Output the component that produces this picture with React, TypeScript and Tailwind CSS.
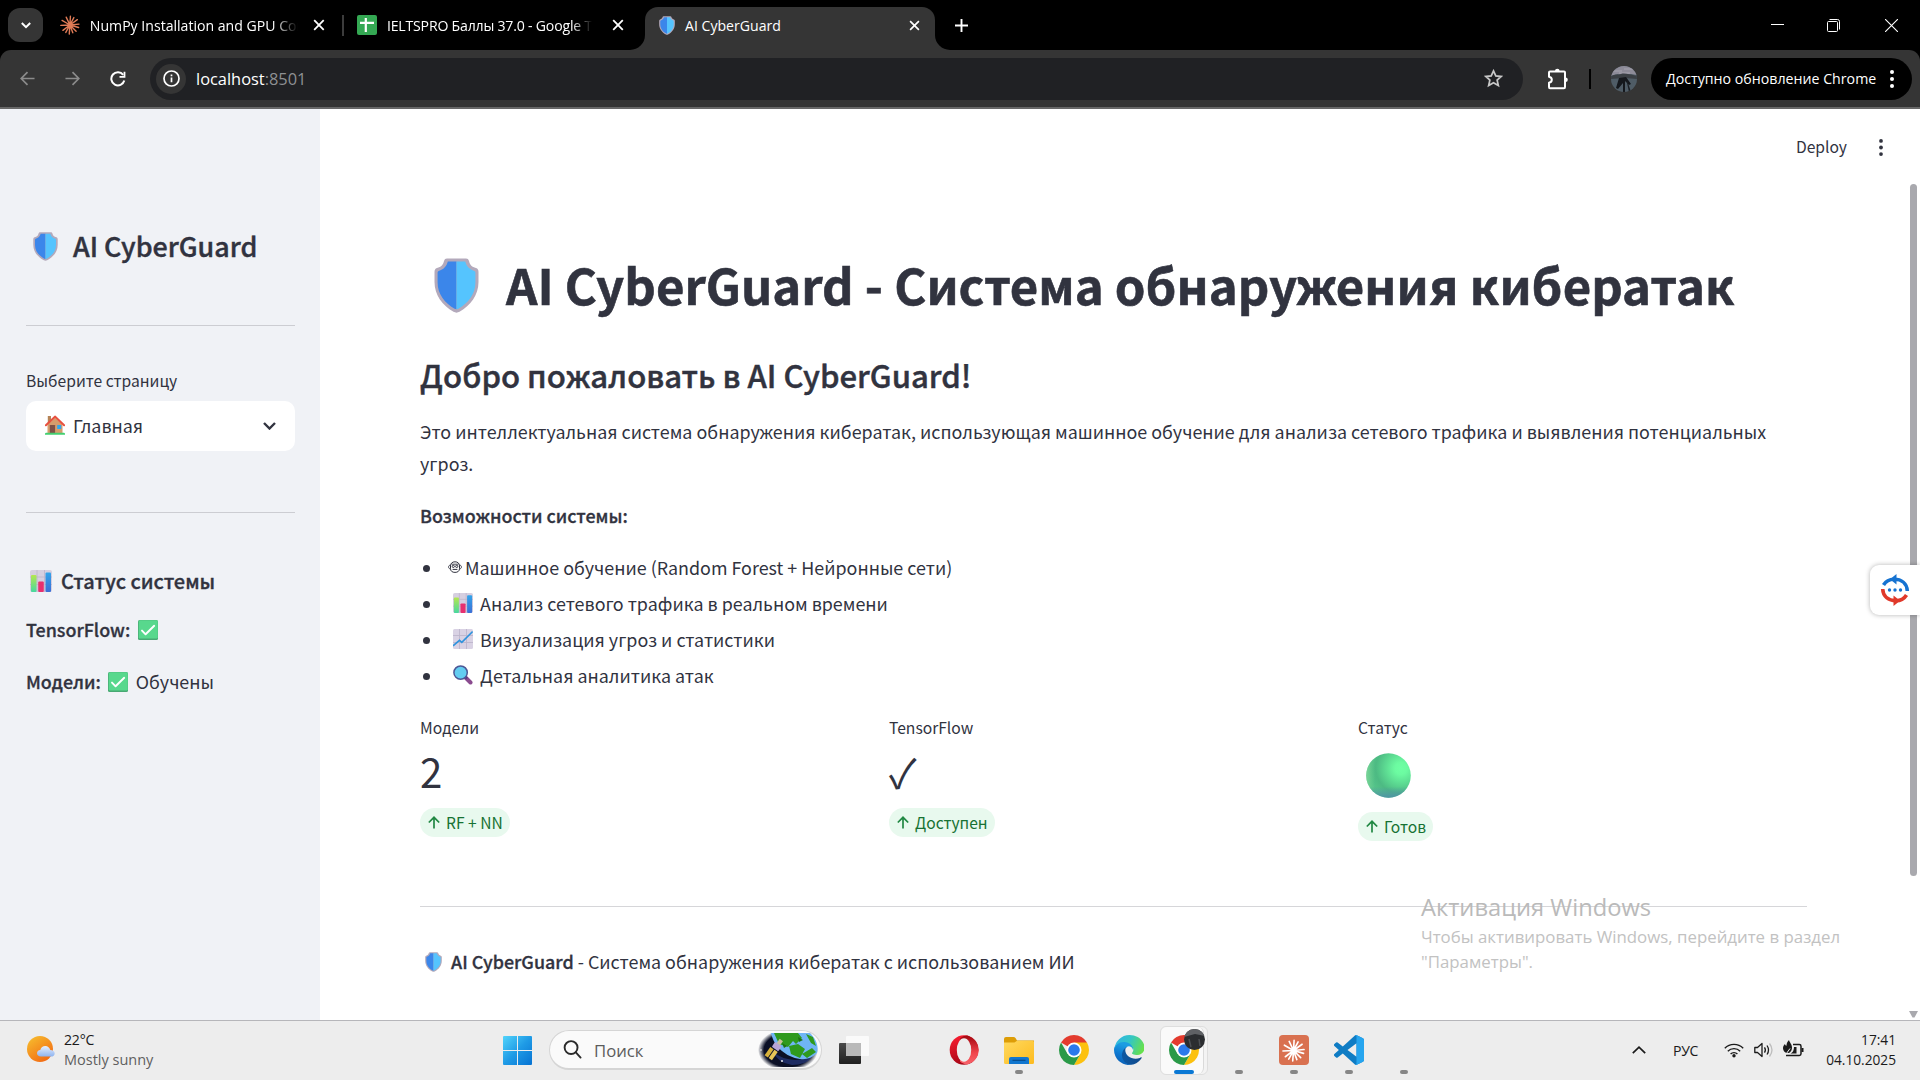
import type { ReactNode } from "react";

type IconProps = { className?: string };

const SOURCE = "font-['Noto_Sans_CJK_SC','Noto_Sans',sans-serif]";
const SEGOE = "font-['Open_Sans','Noto_Sans',sans-serif]";

/* ---------- emoji-like drawings ---------- */

function Shield({ className }: IconProps) {
  return (
    <svg viewBox="0 0 45 55" className={className} preserveAspectRatio="none">
      <path d="M13 .5h19c1.500 0 2.500.8 3 2.500C36 7 38 9 42 10c1.800.6 2.500 2 2.500 4v10c0 13-8 23.500-19 29.800-2 1.100-4 1.100-6 0C8.500 47.500.5 37 .5 24V14c0-2 .7-3.400 2.500-4C7 9 9 7 10 3c.5-1.700 1.500-2.500 3-2.500z" fill="#b3a9bb" />
      <path d="M22.500 3.500H13.800C12.500 8.500 9.500 11.500 4.800 13 3.900 13.300 3.600 14 3.600 15v9.500c0 11.500 7 20.500 17 26.300.6.3 1.200.5 1.900.5z" fill="#3b86ea" />
      <path d="M22.500 3.500h8.700c1.300 5 4.300 8 9 9.500.9.3 1.200 1 1.200 2v9.500c0 11.500-7 20.500-17 26.300-.6.300-1.200.5-1.900.5z" fill="#55c4fe" />
    </svg>
  );
}

function BarChart({ className }: IconProps) {
  return (
    <svg viewBox="0 0 22 22" className={className}>
      <defs>
        <linearGradient id="bar-green" x2="0" y2="1"><stop stopColor="#b4e650" /><stop offset="1" stopColor="#48d8a0" /></linearGradient>
        <linearGradient id="bar-blue" x2="0" y2="1"><stop stopColor="#32a4ea" /><stop offset="1" stopColor="#3c6fd6" /></linearGradient>
      </defs>
      <rect width="22" height="22" rx="2" fill="#d6cfe0" />
      <path d="M7 0v22M14.500 0v22M0 7h22M0 14.500h22" stroke="#bdb4ca" strokeWidth=".8" />
      <rect x="1" y="5" width="5.500" height="17" rx="1" fill="url(#bar-green)" />
      <rect x="8.200" y="11.500" width="5.600" height="10.500" rx="1" fill="#e7306f" />
      <rect x="15.500" y="2.500" width="5.500" height="19.500" rx="1" fill="url(#bar-blue)" />
    </svg>
  );
}

function LineChart({ className }: IconProps) {
  return (
    <svg viewBox="0 0 20 20" className={className}>
      <rect width="20" height="20" rx="1.500" fill="#d9d2e4" />
      <path d="M6.500 0v20M13.500 0v20M0 6.500h20M0 13.500h20" stroke="#beb5cc" strokeWidth=".9" />
      <path d="M0 16.800 6.500 11.300l2.300 2L19.600 2.600" fill="none" stroke="#2f93dd" strokeWidth="1.600" />
    </svg>
  );
}

function Magnifier({ className }: IconProps) {
  return (
    <svg viewBox="0 0 20 20" className={className}>
      <path d="m12.500 12.500 5 5" stroke="#8a4b8f" strokeWidth="4" strokeLinecap="round" />
      <path d="m11.800 11.500 2.200 2.200" stroke="#5a3b82" strokeWidth="2.500" />
      <circle cx="7.600" cy="7.600" r="6.700" fill="#63cdf1" stroke="#4d5796" strokeWidth="1.500" />
    </svg>
  );
}

function House({ className }: IconProps) {
  return (
    <svg viewBox="0 0 20 20" className={className}>
      <rect x="2.800" y="1" width="3.200" height="7" fill="#b58356" />
      <path d="M2.500 9.500 10.200 2.500l7.300 7V18.500h-15z" fill="#d69c6c" />
      <rect x="4.800" y="10" width="5.300" height="8" rx=".4" fill="#7f5147" />
      <rect x="12.200" y="10" width="4" height="4" fill="#2fa6ee" />
      <path d="M.9 10.300 10.200 1.600l8.900 8.700" fill="none" stroke="#e8503f" strokeWidth="2" strokeLinecap="round" strokeLinejoin="round" />
      <path d="M0 19q0-1.300 1.200-1.300h17.600q1.200 0 1.200 1.300v.8H0z" fill="#43cf70" />
    </svg>
  );
}

function CheckBox({ className }: IconProps) {
  return (
    <svg viewBox="0 0 20 20" className={className}>
      <rect width="20" height="20" rx="1.500" fill="#48a873" />
      <rect x=".7" y=".2" width="19.100" height="18.300" rx="1.200" fill="#58d88d" />
      <path d="m4 10.600 3.600 3.700L16.200 5.800" fill="none" stroke="#fff" strokeWidth="1.900" strokeLinecap="round" strokeLinejoin="round" />
    </svg>
  );
}

function GreenBall({ className }: IconProps) {
  return (
    <svg viewBox="0 0 45 45" className={className}>
      <defs>
        <radialGradient id="ball" cx=".78" cy=".34" r=".75"><stop stopColor="#6fffa4" /><stop offset=".18" stopColor="#6cfba1" /><stop offset=".75" stopColor="#4dba83" /><stop offset="1" stopColor="#55c48a" /></radialGradient>
        <linearGradient id="ball-edge" x2="0" y2="1"><stop offset=".75" stopColor="#4f8da8" stopOpacity="0" /><stop offset="1" stopColor="#4f8da8" stopOpacity=".9" /></linearGradient>
        <linearGradient id="ball-left"><stop stopColor="#86d99c" stopOpacity=".8" /><stop offset=".2" stopColor="#6dcf90" stopOpacity="0" /></linearGradient>
      </defs>
      <circle cx="22.500" cy="22.500" r="22.300" fill="url(#ball)" />
      <circle cx="22.500" cy="22.500" r="22.300" fill="url(#ball-left)" />
      <circle cx="22.500" cy="22.500" r="22.300" fill="url(#ball-edge)" />
    </svg>
  );
}

function RobotFace({ className }: IconProps) {
  return (
    <svg viewBox="0 0 14 12" className={className} fill="none" stroke="#31333f">
      <path d="M2.500 5C2.500 2.300 4.300.8 7 .8S11.500 2.300 11.500 5v2.600c0 2.500-1.800 3.800-4.500 3.800S2.500 10.100 2.500 7.600z" strokeWidth="1" />
      <path d="M2.500 4.200C1 4.200.6 5 .6 6s.4 1.800 1.900 1.800M11.500 4.200c1.500 0 1.900.8 1.900 1.800s-.4 1.800-1.900 1.800" strokeWidth=".9" />
      <path d="M3.500 3.200h7" strokeWidth=".9" />
      <circle cx="5.300" cy="5.400" r="1.100" strokeWidth="1" />
      <circle cx="8.700" cy="5.400" r="1.100" strokeWidth="1" />
      <path d="M4.600 8.400h4.800" strokeWidth="1" />
    </svg>
  );
}

/* ---------- browser icons ---------- */

function Burst({ className }: IconProps) {
  return (
    <svg viewBox="0 0 24 24" className={className} fill="none" stroke="currentColor" strokeWidth="1.700" strokeLinecap="round">
      <path d="M12 12 12.600 1.500M12 12l4.800-9M12 12l9-6.500M12 12l11-1M12 12l10.500 3M12 12l7.500 7.500M12 12l3.500 9.500M12 12l-.8 11M12 12l-5 9M12 12 3.500 18.500M12 12 1 12.500M12 12 2.500 6.500M12 12 7.500 2.500" />
    </svg>
  );
}

function Sheets({ className }: IconProps) {
  return (
    <svg viewBox="0 0 20 20" className={className}>
      <rect width="20" height="20" rx="2" fill="#34a853" />
      <path d="M8.800 3v14M3 7.800h14" stroke="#fff" strokeWidth="2.200" />
    </svg>
  );
}

function Cross({ className }: IconProps) {
  return (
    <svg viewBox="0 0 12 12" className={className} fill="none" stroke="currentColor" strokeWidth="1.800">
      <path d="m1.200 1.200 9.600 9.600m0-9.600-9.600 9.600" />
    </svg>
  );
}

function Dots({ className }: IconProps) {
  return (
    <svg viewBox="0 0 4 18" className={className} fill="currentColor">
      <circle cx="2" cy="2" r="2" />
      <circle cx="2" cy="9" r="2" />
      <circle cx="2" cy="16" r="2" />
    </svg>
  );
}

function Avatar({ className }: IconProps) {
  return (
    <svg viewBox="0 0 26 26" className={className}>
      <defs><clipPath id="avatar"><circle cx="13" cy="13" r="13" /></clipPath></defs>
      <g clipPath="url(#avatar)">
        <rect width="26" height="26" fill="#4f5c66" />
        <path d="M0 0h26v9l-6-1-7 1-7-1-6 2z" fill="#8d8b98" />
        <path d="M2 5h9M13 3h9M8 7h11" stroke="#a5a3af" />
        <path d="M0 10c4-2 7-1 10-2s8 0 16 2v3c-6-1-19-1-26 0z" fill="#3a3f44" />
        <path d="m8 12 7-1 5 7-2 1-4-4v11h-2v-9l-5 6-2-1z" fill="#15181d" />
        <path d="m16 14 4 12h-2l-2-9z" fill="#1b1f25" />
      </g>
    </svg>
  );
}

/* ---------- taskbar logos ---------- */

function ChromeLogo({ className }: IconProps) {
  return (
    <svg viewBox="0 0 48 48" className={className}>
      <path d="M24 24 3.220 12A24 24 0 0 1 44.780 12z" fill="#e33b2e" />
      <path d="M24 12h20.780A24 24 0 0 1 24 48l10.390-18z" fill="#fcc10f" />
      <path d="M3.220 12A24 24 0 0 0 24 48l10.390-18L24 24 13.610 30z" fill="#2a9a48" />
      <circle cx="24" cy="24" r="12" fill="#fff" />
      <circle cx="24" cy="24" r="9.300" fill="#2b79ec" />
    </svg>
  );
}

function EdgeLogo({ className }: IconProps) {
  return (
    <svg viewBox="0 0 256 256" className={className}>
      <defs>
        <linearGradient id="edge-a" x1="0" x2="1"><stop stopColor="#0c59a4" /><stop offset="1" stopColor="#114a8b" /></linearGradient>
        <linearGradient id="edge-b" x1=".6" y1=".2" x2=".4" y2="1"><stop stopColor="#1b9de2" /><stop offset=".5" stopColor="#0e78d0" /><stop offset="1" stopColor="#0a5fb5" /></linearGradient>
        <linearGradient id="edge-c" x1="0" y1=".2" x2="1" y2=".5"><stop stopColor="#2fb4e6" /><stop offset=".5" stopColor="#34c6c4" /><stop offset="1" stopColor="#66e04c" /></linearGradient>
      </defs>
      <g transform="translate(-4.630 -4.920)">
        <path fill="url(#edge-a)" d="M235.680 195.460a93.730 93.730 0 0 1-10.540 4.710 101.870 101.870 0 0 1-35.900 6.460c-47.320 0-88.540-32.550-88.540-74.320A31.480 31.480 0 0 1 117.130 105c-42.800 1.800-53.800 46.400-53.800 72.530 0 73.880 68.090 81.370 82.760 81.370 7.910 0 19.840-2.300 27-4.560l1.310-.44A128.340 128.340 0 0 0 241 201.100a4 4 0 0 0-5.320-5.640z" />
        <path fill="url(#edge-b)" d="M110.340 246.340A79.200 79.200 0 0 1 87.600 225a80.720 80.720 0 0 1 29.530-120c3.120-1.470 8.450-4.130 15.540-4a32.350 32.350 0 0 1 25.690 13 31.880 31.880 0 0 1 6.360 18.660c0-.21 24.460-79.600-80-79.600-43.900 0-80 41.660-80 78.210a130.150 130.150 0 0 0 12.110 56 128 128 0 0 0 156.380 67.110 75.550 75.550 0 0 1-62.870-8.040z" />
        <path fill="url(#edge-c)" d="M161.610 153.940c-.81 1.050-3.300 2.500-3.300 5.660 0 2.610 1.700 5.120 4.720 7.230 14.380 10 41.490 8.680 41.560 8.680a59.560 59.560 0 0 0 30.270-8.350 61.380 61.380 0 0 0 30.440-52.860c.26-22.410-8-37.310-11.340-43.910C232.760 28.930 187 5.090 137.300 5.090a128 128 0 0 0-128 126.200c.48-36.540 36.800-66.050 80-66.050 3.500 0 23.460.34 42 10.070 16.340 8.580 24.900 18.940 30.850 29.210 6.180 10.670 7.280 24.150 7.280 29.520s-2.750 13.330-7.820 19.900z" />
      </g>
    </svg>
  );
}

function VsCodeLogo({ className }: IconProps) {
  return (
    <svg viewBox="0 0 24 24" className={className}>
      <path fill="#0f7cc4" fillRule="evenodd" d="M23.150 2.587 18.210.21a1.494 1.494 0 0 0-1.705.29l-9.460 8.630-4.120-3.128a.999.999 0 0 0-1.276.057L.327 7.261A1 1 0 0 0 .326 8.740L3.899 12 .326 15.260a1 1 0 0 0 .001 1.479L1.650 17.940a.999.999 0 0 0 1.276.057l4.120-3.128 9.460 8.630a1.492 1.492 0 0 0 1.704.29l4.942-2.377A1.500 1.500 0 0 0 24 20.060V3.939a1.500 1.500 0 0 0-.85-1.352zm-5.146 14.861L10.826 12l7.178-5.448v10.896z" />
      <path fill="#26a5ef" d="M18.210.21 23.150 2.587A1.500 1.500 0 0 1 24 3.939V20.060a1.500 1.500 0 0 1-.85 1.352L18.210 23.790c-.6.280-1.200.15-1.650-.25.600.3 1.440-.1 1.440-.9V1.360c0-.8-.84-1.200-1.440-.9.450-.4 1.050-.530 1.650-.250z" />
    </svg>
  );
}

function OperaLogo({ className }: IconProps) {
  return (
    <svg viewBox="0 0 30 30" className={className}>
      <defs>
        <linearGradient id="opera-a" x2=".3" y2="1"><stop stopColor="#ff1f33" /><stop offset="1" stopColor="#a80716" /></linearGradient>
        <linearGradient id="opera-b" x2="0" y2="1"><stop stopColor="#a3060f" /><stop offset=".6" stopColor="#f0454c" /><stop offset="1" stopColor="#f8646b" /></linearGradient>
      </defs>
      <ellipse cx="15" cy="15" rx="14.300" ry="14.800" fill="url(#opera-a)" />
      <path fill="url(#opera-b)" d="M11 3.500C13.500 1.500 16.500.2 19 .7A14.500 14.800 0 0 1 19 29.300c-2.500.5-5.500-.8-8-2.800z" />
      <ellipse cx="15" cy="15" rx="7.200" ry="11.800" fill="#ededed" />
    </svg>
  );
}

function FolderLogo({ className }: IconProps) {
  return (
    <svg viewBox="0 0 30 27" className={className}>
      <defs><linearGradient id="folder" x2="1" y2="1"><stop stopColor="#ffd95e" /><stop offset="1" stopColor="#fdbb1f" /></linearGradient></defs>
      <path d="M0 2Q0 0 2 0h7.500q1.200 0 2 1l1.500 2.500H30V10H0z" fill="#dd9d07" />
      <path d="M0 5.500h10.500L13 3.700h15.500q1.500 0 1.500 1.500v20.300q0 1.500-1.500 1.500h-27Q0 27 0 25.500z" fill="url(#folder)" />
      <path d="M5 27v-5q0-2 2-2h16q2 0 2 2v5z" fill="#1277cf" />
      <path d="M8.500 23.300h13" stroke="#0a4c8c" strokeWidth="1.200" />
    </svg>
  );
}

function WindowsLogo({ className }: IconProps) {
  return (
    <svg viewBox="0 0 29 29" className={className}>
      <defs><linearGradient id="win" gradientUnits="userSpaceOnUse" x1="0" y1="0" x2="29" y2="29"><stop stopColor="#52d4fb" /><stop offset=".5" stopColor="#1f9be6" /><stop offset="1" stopColor="#0672d2" /></linearGradient></defs>
      <path fill="url(#win)" d="M1 0h13v14H0V1q0-1 1-1zM15 0h13q1 0 1 1v13H15zM0 15h14v14H1q-1 0-1-1zM15 15h14v13q0 1-1 1H15z" />
    </svg>
  );
}

function Weather({ className }: IconProps) {
  return (
    <svg viewBox="0 0 28 26" className={className}>
      <defs>
        <linearGradient id="sun" x2=".7" y2="1"><stop stopColor="#f7c22f" /><stop offset="1" stopColor="#f26a14" /></linearGradient>
        <linearGradient id="cloud" x2="0" y2="1"><stop stopColor="#e7f0ff" /><stop offset="1" stopColor="#8fb4f0" /></linearGradient>
      </defs>
      <circle cx="13" cy="13" r="13" fill="url(#sun)" />
      <path d="M14 20.500c-2.500 0-4-1.500-4-3.300s1.400-3.200 3.300-3.200c.6-2.500 2.600-4 5-4s4.500 1.700 5 4c2.600 0 4.400 1.300 4.400 3.400s-1.600 3.100-3.700 3.100z" fill="url(#cloud)" />
    </svg>
  );
}

function Earth({ className }: IconProps) {
  return (
    <svg viewBox="0 0 60 34" className={className}>
      <defs>
        <radialGradient id="space"><stop offset=".8" stopColor="#0b1026" /><stop offset="1" stopColor="#0b1026" stopOpacity="0" /></radialGradient>
        <clipPath id="earth"><path d="M13 0h39c6 6 9 13 7 20-5 5-11 7-17 6C28 24 16 14 13 0z" /></clipPath>
      </defs>
      <ellipse cx="30" cy="17" rx="30" ry="21" fill="url(#space)" />
      <path d="M14 18q16 14 40 6-6 8-20 8-14-2-20-14z" fill="#2c3f8c" opacity=".6" />
      <g clipPath="url(#earth)">
        <rect width="60" height="34" fill="#6fb5f5" />
        <path d="M16 0h24l4 5-6 6-3-3-5 6-9-3zM31 13l9-2 7 5-5 9-9-4zM48 1l7 3 3 9-5-3zM44 21l10-6 4 4-9 6z" fill="#2f9a1e" />
        <path d="m40 4 5 3-4 2zM24 10l5 3-3 2z" fill="#1f7314" />
      </g>
      <g transform="rotate(35 17 16)">
        <rect x="13" y="10" width="8" height="6" rx="1" fill="#b9a5d6" />
        <rect x="12" y="17" width="4" height="10" fill="#d8b23c" />
        <rect x="17" y="17" width="4" height="10" fill="#e6c558" />
        <rect x="15" y="5" width="4" height="5" fill="#cdbf9d" />
      </g>
      <circle cx="3" cy="17" r=".8" fill="#fff" /><circle cx="24" cy="28" r=".9" fill="#fff" />
    </svg>
  );
}

/* ---------- sections ---------- */

function TabStrip() {
  return (
    <div className={`flex h-[50px] items-start bg-black text-[14.100px] text-white ${SEGOE}`}>
      <div className="mt-2 ml-2 flex h-[34px] w-[35px] items-center justify-center rounded-[12px] bg-[#353535]">
        <svg viewBox="0 0 10 7" className="h-[7px] w-[10px]" fill="none" stroke="#fff" strokeWidth="2"><path d="m.8 1 4.200 4.200L9.200 1" /></svg>
      </div>
      <div className="ml-[17px] flex h-[50px] w-[284px] items-center">
        <Burst className="size-5 text-[#e07b56]" />
        <div className="ml-[10px] w-[210px] overflow-hidden mask-r-from-88% pt-[2px] whitespace-nowrap">NumPy Installation and GPU Con</div>
        <Cross className="ml-[15px] size-[12px]" />
        <div className="ml-[17px] h-[21px] w-[2px] shrink-0 bg-[#3c3c3c]" />
      </div>
      <div className="ml-[13px] flex h-[50px] w-[273px] items-center">
        <Sheets className="size-5" />
        <div className="ml-[10px] w-[205px] overflow-hidden mask-r-from-90% pt-[2px] whitespace-nowrap tracking-[-0.200px]">IELTSPRO Баллы 37.0 - Google Т</div>
        <Cross className="ml-[20px] size-[12px]" />
      </div>
      <div className="flex h-[50px] w-[320px] items-end">
        <div className="h-[15px] w-[15px] overflow-hidden bg-[#353535]"><div className="h-full w-full rounded-br-[15px] bg-black" /></div>
        <div className="flex h-[43px] w-[290px] items-center rounded-t-[13px] bg-[#353535] pb-[7px]">
          <Shield className="ml-[14px] h-[19px] w-[16px]" />
          <div className="ml-[10px] w-[220px] pt-px">AI CyberGuard</div>
          <Cross className="ml-[4px] size-[11px]" />
        </div>
        <div className="h-[15px] w-[15px] overflow-hidden bg-[#353535]"><div className="h-full w-full rounded-bl-[15px] bg-black" /></div>
      </div>
      <div className="flex h-[50px] items-center pl-[5px]">
        <svg viewBox="0 0 13 13" className="size-[13px]" stroke="#fff" strokeWidth="1.900"><path d="M6.500 0v13M0 6.500h13" /></svg>
      </div>
      <div className="ml-auto flex h-[50px] items-center pr-[22px]">
        <svg viewBox="0 0 13 13" className="size-[13px]" stroke="#fff"><path d="M0 5.500h13" /></svg>
        <svg viewBox="0 0 13 13" className="ml-[43px] size-[13px]" fill="none" stroke="#fff"><rect x=".5" y="2.500" width="10" height="10" rx="1" /><path d="M2.500.5h8q2 0 2 2v8" /></svg>
        <svg viewBox="0 0 13 13" className="ml-[45px] size-[13px]" stroke="#fff" strokeWidth="1.100"><path d="m0 0 13 13M13 0 0 13" /></svg>
      </div>
    </div>
  );
}

function Toolbar() {
  return (
    <div className="bg-black">
      <div className={`flex h-[57px] items-center rounded-t-[11px] bg-[#353535] ${SEGOE}`}>
        <svg viewBox="0 0 16 16" className="ml-[20px] size-[15px]" fill="none" stroke="#8b8b8b" strokeWidth="1.800"><path d="M15.500 8H1.500M8 1.200 1.300 8 8 14.800" /></svg>
        <svg viewBox="0 0 16 16" className="ml-[30px] size-[15px]" fill="none" stroke="#8b8b8b" strokeWidth="1.800"><path d="M.5 8h14M8 1.200 14.700 8 8 14.800" /></svg>
        <svg viewBox="0 0 16 16" className="ml-[30px] size-[16px]" fill="none" stroke="#fff" strokeWidth="2"><path d="M14.300 9.500A6.600 6.600 0 1 1 13.200 3.800" /><path d="M14.500.8v5H9.500" strokeWidth="1.800" /></svg>
        <div className="ml-[24px] flex h-[42px] w-[1373px] items-center rounded-full bg-[#202124] pr-[20px] pl-[6px]">
          <div className="flex size-[30px] items-center justify-center rounded-full bg-[#353535]">
            <svg viewBox="0 0 17 17" className="size-[17px]" fill="none" stroke="#fff" strokeWidth="1.700"><circle cx="8.500" cy="8.500" r="7.500" /><path d="M8.500 7.500v4.700M8.500 4.600v1.600" /></svg>
          </div>
          <div className="ml-[10px] pt-[2px] text-[16.400px] text-white">localhost<span className="text-[#8e9093]">:8501</span></div>
          <svg viewBox="0 0 24 24" className="ml-auto size-[19px]" fill="none" stroke="#c7c7c7" strokeWidth="2.200"><path d="m12 2.500 2.900 6.300 6.800.7-5.100 4.600 1.500 6.800L12 17.400l-6.100 3.500 1.500-6.800-5.100-4.600 6.800-.7z" /></svg>
        </div>
        <svg viewBox="0 0 22 22" className="ml-[24px] size-[22px]" fill="none" stroke="#fff" strokeWidth="2" strokeLinejoin="round"><path d="M2 4.500q0-1 1-1h14q1 0 1 1V19q0 1.200-1 1.200H3q-1 0-1-1.200v-4.200q2.800-.5 2.800-3T2 8.800z" /><path d="M8 3a2.300 2.300 0 0 1 4.600 0zM18.500 9.500a2.300 2.300 0 0 1 0 4.600z" fill="#fff" stroke="none" /></svg>
        <div className="ml-[20px] h-[20px] w-[2px] bg-black" />
        <Avatar className="ml-[20px] size-[26px]" />
        <div className="ml-[14px] flex h-[42px] w-[261px] items-center rounded-full bg-black pl-[15px] text-[14.200px] text-white">
          <span className="whitespace-nowrap">Доступно обновление Chrome</span>
          <Dots className="ml-[14px] h-[18px] w-[4px]" />
        </div>
      </div>
      <div className="h-[2px] bg-[#686868]" />
    </div>
  );
}

function Sidebar() {
  return (
    <aside className="h-full w-[320px] shrink-0 bg-[#f0f2f6] px-[26px] pt-[119px] text-[17.900px]">
      <h1 className="flex h-9 items-center text-[26.900px] font-medium [-webkit-text-stroke:0.400px]">
        <Shield className="ml-[7px] h-[29px] w-[25px]" />
        <span className="ml-[15px] whitespace-nowrap">AI CyberGuard</span>
      </h1>
      <div className="mt-[61px] h-px w-[269px] bg-[#cccdd2]" />
      <div className="mt-[43px] h-6 text-[15.630px] leading-6">Выберите страницу</div>
      <div className="mt-2 flex h-[50px] w-[269px] items-center rounded-[10px] bg-white pb-[2px] pl-[19px]">
        <House className="size-[20px]" />
        <span className="ml-[8px] w-[190px]">Главная</span>
        <svg viewBox="0 0 13 8" className="mt-px h-[8px] w-[13px]" fill="none" stroke="#31333f" strokeWidth="2.400"><path d="m1 1 5.500 5.500L12 1" /></svg>
      </div>
      <div className="mt-[61px] h-px w-[269px] bg-[#cccdd2]" />
      <h3 className="mt-[53px] flex h-[30px] items-center text-[19.950px] font-medium [-webkit-text-stroke:0.350px]">
        <BarChart className="ml-[4px] size-[22px]" />
        <span className="ml-[9px]">Статус системы</span>
      </h3>
      <div className="mt-[17px] flex h-8 items-center">
        <b className="font-medium [-webkit-text-stroke:0.300px]">TensorFlow:</b>
        <CheckBox className="mt-[2px] ml-[8px] size-[20px]" />
      </div>
      <div className="mt-[20px] flex h-8 items-center">
        <b className="font-medium [-webkit-text-stroke:0.300px]">Модели:</b>
        <CheckBox className="mt-[2px] ml-[7px] size-[20px]" />
        <span className="ml-[8px]">Обучены</span>
      </div>
    </aside>
  );
}

function Metric({ label, delta, tall, children }: { label: string; delta: string; tall?: boolean; children: ReactNode }) {
  return (
    <div className="flex flex-col items-start">
      <div className="h-6 pt-px text-[15.630px] leading-6">{label}</div>
      <div className={`mt-px flex items-center text-[40.200px] leading-[60px] ${tall ? "h-[64px]" : "h-[60px] pt-[2px]"}`}>{children}</div>
      <div className="mt-2 flex h-[29px] items-center rounded-full bg-[#e8f9ee] pr-[7px] pl-[8px] text-[15.600px] leading-[29px] text-[#177233]">
        <svg viewBox="0 0 12 13" className="mr-[6px] h-[13px] w-[12px]" fill="none" stroke="#218843" strokeWidth="1.700"><path d="M6 12.500V1.500M.8 6.500 6 1.300l5.200 5.200" /></svg>
        {delta}
      </div>
    </div>
  );
}

function Feature({ icon, children }: { icon: ReactNode; children: ReactNode }) {
  return (
    <li className="flex h-9 items-center">
      <span className="mt-[2px] mr-[18px] ml-[3px] size-[7px] rounded-full bg-[#31333f]" />
      {icon}
      <span>{children}</span>
    </li>
  );
}

function MainPage() {
  return (
    <main className="relative h-full flex-1 bg-white">
      <div className="absolute top-[24px] right-[37px] flex h-7 items-center text-[15.630px]">
        <span>Deploy</span>
        <Dots className="ml-[32px] h-[17px] w-[4px]" />
      </div>
      <div className="ml-[100px] w-[1387px] pt-[142px] text-[17.900px]">
        <h1 className="flex h-[66px] items-center text-[49.100px] font-bold [-webkit-text-stroke:0.600px]">
          <Shield className="mt-[2px] ml-[14px] h-[55px] w-[45px]" />
          <span className="ml-[27px] whitespace-nowrap">AI CyberGuard - Система обнаружения кибератак</span>
        </h1>
        <h3 className="mt-[37px] h-[41px] text-[31.110px] leading-[42px] font-medium [-webkit-text-stroke:0.450px]">Добро пожаловать в AI CyberGuard!</h3>
        <p className="mt-[20px] leading-8">Это интеллектуальная система обнаружения кибератак, использующая машинное обучение для анализа сетевого трафика и выявления потенциальных угроз.</p>
        <p className="mt-[20px] leading-8 font-medium [-webkit-text-stroke:0.300px]">Возможности системы:</p>
        <ul className="mt-[18px]">
          <Feature icon={<RobotFace className="mr-[3px] h-[12px] w-[14px]" />}>Машинное обучение (Random Forest + Нейронные сети)</Feature>
          <Feature icon={<BarChart className="mr-[7px] ml-[5px] size-[20px]" />}>Анализ сетевого трафика в реальном времени</Feature>
          <Feature icon={<LineChart className="mr-[7px] ml-[5px] size-[20px]" />}>Визуализация угроз и статистики</Feature>
          <Feature icon={<Magnifier className="mr-[7px] ml-[5px] size-[20px]" />}>Детальная аналитика атак</Feature>
        </ul>
        <div className="mt-[22px] grid grid-cols-3 gap-5">
          <Metric label="Модели" delta="RF + NN">2</Metric>
          <Metric label="TensorFlow" delta="Доступен">✓</Metric>
          <Metric label="Статус" delta="Готов" tall><GreenBall className="mt-[7px] ml-[8px] size-[45px]" /></Metric>
        </div>
        <div className="mt-[65px] h-px bg-[#d6d6d9]" />
        <div className="mt-[38px] flex h-8 items-center">
          <Shield className="mt-px mr-[9px] ml-[5px] h-[20px] w-[17px]" />
          <span><b className="font-medium [-webkit-text-stroke:0.300px]">AI CyberGuard</b> - Система обнаружения кибератак с использованием ИИ</span>
        </div>
      </div>

      <div className={`absolute top-[786px] left-[1101px] text-[16.840px] leading-[25px] text-[#c2c2c2] ${SEGOE}`}>
        <div className="text-[23.700px] leading-[25px] text-[#bababa]">Активация Windows</div>
        <div className="mt-[4px] w-[430px]">Чтобы активировать Windows, перейдите в раздел "Параметры".</div>
      </div>
      <div className="absolute top-[75px] right-[3px] h-[692px] w-[7px] rounded-full bg-[#a9a9ae]" />
      <svg viewBox="0 0 9 7" className="absolute right-[2px] bottom-[2px] h-[7px] w-[9px]" fill="#a9a9ae"><path d="M0 0h9L5.500 6.500h-2z" /></svg>
      <div className="absolute top-[456px] right-0 flex h-[50px] w-[50px] items-center rounded-l-[9px] bg-white pl-[9px] shadow-[0_0_5px_rgba(0,0,0,0.300)]">
        <svg viewBox="0 0 32 32" className="size-[32px]" fill="none">
          <path d="M4.500 11C7 7 10.500 5.300 15 5.300c7.500 0 13 4.200 13.300 11.700" stroke="#1673d1" strokeWidth="3.600" />
          <path d="m17.500 0-6.500 5.300 6.500 5.200z" fill="#1673d1" />
          <path d="M27.500 21c-2.500 4-6 5.700-10.500 5.700-7.500 0-13-4.200-13.300-11.700" stroke="#e0392b" strokeWidth="3.600" />
          <path d="m14.500 32 6.500-5.300-6.500-5.200z" fill="#e0392b" />
          <circle cx="10.500" cy="16" r="1.700" fill="#1673d1" /><circle cx="16" cy="16" r="1.700" fill="#1673d1" /><circle cx="21.500" cy="16" r="1.700" fill="#1673d1" />
        </svg>
      </div>
    </main>
  );
}

function TaskItem({ children, dot }: { children?: ReactNode; dot?: boolean }) {
  return (
    <div className="flex h-[59px] w-[55px] flex-col items-center pt-[14px]">
      <div className="flex h-[30px] items-center">{children}</div>
      {dot && <div className="mt-[5px] h-[4px] w-[8px] rounded-full bg-[#868686]" />}
    </div>
  );
}

function Taskbar() {
  return (
    <footer className={`flex h-[60px] border-t border-[#b6b6ba] bg-[#ededed] text-[14.100px] text-[#1b1b1b] ${SEGOE}`}>
      <div className="flex w-[503px] items-start pl-[27px]">
        <Weather className="mt-[15px] h-[26px] w-[28px]" />
        <div className="mt-[9px] ml-[9px] leading-5">
          <div className="tracking-[-0.200px]">22°C</div>
          <div className="text-[14.500px] text-[#5f5f5f]">Mostly sunny</div>
        </div>
      </div>
      <WindowsLogo className="mt-[15px] size-[29px]" />
      <div className="mt-[9px] ml-[17px] flex h-[40px] w-[273px] items-center rounded-full border border-b-2 border-[#d5d5d5] bg-[#fafafa] pl-[13px]">
        <svg viewBox="0 0 20 20" className="size-[19px]" fill="none" stroke="#2a2a2a" strokeWidth="2" strokeLinecap="round"><circle cx="8.500" cy="8" r="6.800" /><path d="m13.500 13 5 5.500" /></svg>
        <span className="ml-[12px] pt-[2px] text-[16.700px] text-[#5c5c5c]">Поиск</span>
        <Earth className="mr-[3px] ml-auto h-[34px] w-[60px]" />
      </div>
      <svg viewBox="0 0 30 28" className="mt-[15px] ml-[17px] h-[28px] w-[30px]">
        <defs><linearGradient id="task-view" x2="0" y2="1"><stop stopColor="#4a4a4a" /><stop offset="1" stopColor="#202020" /></linearGradient></defs>
        <rect y="7" width="22" height="21" rx="1" fill="url(#task-view)" />
        <rect x="7" width="23" height="20" rx="1" fill="#fafafa" />
        <path d="M7 7h15v13H7z" fill="#b9b9b9" />
      </svg>
      <div className="ml-[67px] flex">
        <TaskItem><OperaLogo className="size-[30px]" /></TaskItem>
        <TaskItem dot><FolderLogo className="h-[27px] w-[30px]" /></TaskItem>
        <TaskItem><ChromeLogo className="size-[30px]" /></TaskItem>
        <TaskItem><EdgeLogo className="size-[30px]" /></TaskItem>
        <div className="relative h-[59px] w-[55px] pt-[5px] pl-[4px]">
          <div className="h-[49px] w-[48px] rounded-[6px] border border-[#dedede] bg-[#f3f3f3]">
            <div className="flex h-full w-[43px] flex-col items-start rounded-[6px] border-r border-[#dadada] bg-[#fafafa] pt-[8px] pl-[8px]">
              <ChromeLogo className="size-[30px] shrink-0" />
              <div className="mt-[5px] ml-[5px] h-[4px] w-[20px] shrink-0 rounded-full bg-[#0a78d4]" />
            </div>
          </div>
          <svg viewBox="0 0 21 21" className="absolute top-[8px] left-[28px] size-[21px]">
            <defs><clipPath id="badge"><circle cx="10.500" cy="10.500" r="10.500" /></clipPath></defs>
            <g clipPath="url(#badge)">
              <rect width="21" height="21" fill="#2b2d30" />
              <path d="M0 0h21v7l-10-2L0 8z" fill="#5f6165" />
              <path d="m5 10 2 8M15 10l1 7" stroke="#4c4f53" strokeWidth="1.500" />
            </g>
          </svg>
        </div>
        <TaskItem dot />
        <TaskItem dot>
          <div className="flex size-[30px] items-center justify-center rounded-[4px] bg-[#d97150]"><Burst className="size-[23px] text-white" /></div>
        </TaskItem>
        <TaskItem dot><VsCodeLogo className="size-[30px]" /></TaskItem>
        <TaskItem dot />
      </div>
      <div className="ml-auto flex items-start pr-[24px]">
        <svg viewBox="0 0 14 8" className="mt-[25px] h-[8px] w-[14px]" fill="none" stroke="#1b1b1b" strokeWidth="1.700"><path d="m.8 7.200 6.200-6 6.200 6" /></svg>
        <span className="mt-[20px] ml-[27px] w-[51px] leading-5 tracking-[-0.300px]">РУС</span>
        <svg viewBox="0 0 20 16" className="mt-[21px] h-[16px] w-[20px]" fill="none" stroke="#1b1b1b" strokeWidth="1.400"><path d="M.8 6.200a13 13 0 0 1 18.400 0M3.800 9.200a8.800 8.800 0 0 1 12.400 0M6.600 12a4.800 4.800 0 0 1 6.800 0" /><circle cx="10" cy="13.800" r="1.700" fill="#1b1b1b" stroke="none" /></svg>
        <svg viewBox="0 0 20 16" className="mt-[21px] ml-[10px] h-[16px] w-[20px]" fill="none" stroke="#1b1b1b" strokeWidth="1.300"><path d="M.8 5.500h2.700L8 1.500v13l-4.500-4H.8z" strokeLinejoin="round" /><path d="M10.500 5.300q1.800 2.700 0 5.400M13 3.500q3 4.500 0 9" /><path d="M15.500 1.500q5 6.500 0 13" stroke="#bdbdbd" /></svg>
        <svg viewBox="0 0 21 17" className="mt-[19px] ml-[9px] h-[17px] w-[21px]"><path d="M10 4.500h6.300q1.700 0 1.700 1.700v7.600q0 1.700-1.700 1.700H3" fill="none" stroke="#1b1b1b" strokeWidth="1.500" /><path d="M18.500 8h2v4h-2zM11 7h2.500v6.500H7.500Q11 12 11 7z" fill="#1b1b1b" /><path d="M6 0c.5 2.500 3 4 3 7.500C9 11 7 13 4.700 13S0 11 0 8c0-2 1-3 2-4 .2 1 .6 1.500 1.500 1.800C3.500 3 4.500 2 6 0z" fill="#1b1b1b" /><path d="m2 15.500 5-7" stroke="#ededed" /></svg>
        <div className="mt-[9px] w-[92px] text-right text-[13.700px] leading-5">
          <div>17:41</div>
          <div>04.10.2025</div>
        </div>
      </div>
    </footer>
  );
}

export default function App() {
  return (
    <div className={`flex h-[1080px] w-[1920px] flex-col overflow-hidden bg-white text-[#31333f] ${SOURCE}`}>
      <TabStrip />
      <Toolbar />
      <div className="flex h-[911px] shrink-0">
        <Sidebar />
        <MainPage />
      </div>
      <Taskbar />
    </div>
  );
}
